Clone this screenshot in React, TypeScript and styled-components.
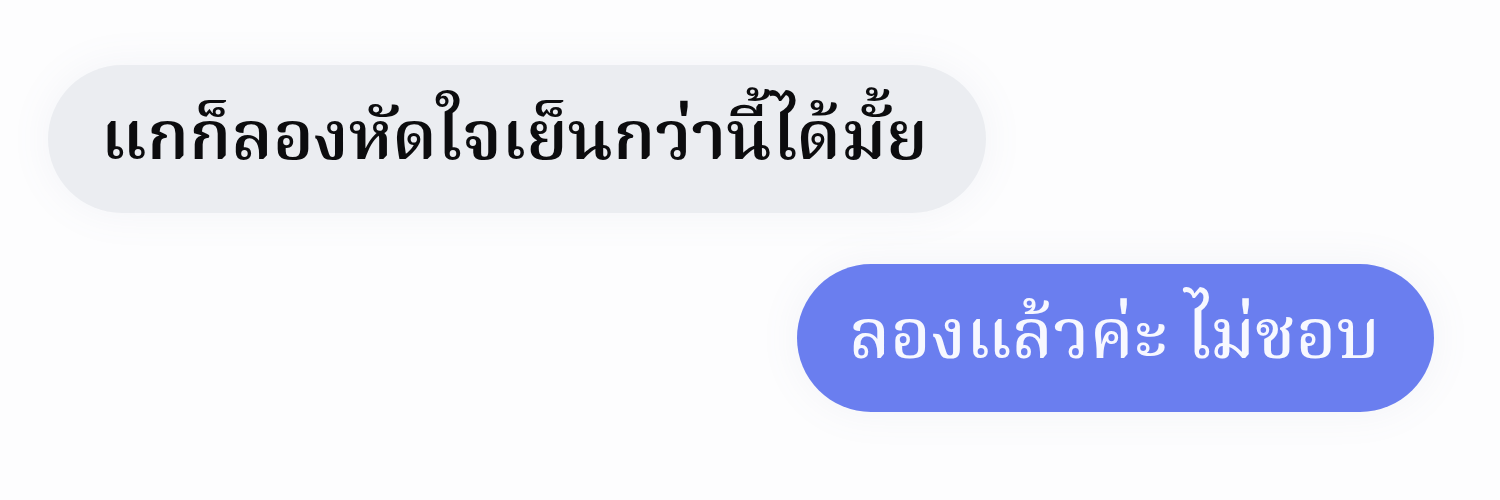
import React from "react";
import styled, { createGlobalStyle } from "styled-components";

const Global = createGlobalStyle`
  html, body { margin: 0; padding: 0; background: #ffffff; }
  body { font-family: "Noto Serif Thai", "Noto Sans Thai", "Noto Sans", sans-serif; }
`;

const Chat = styled.div`
  width: 1500px;
  height: 500px;
  box-sizing: border-box;
  padding: 65px 66px 0 48px;
  display: flex;
  flex-direction: column;
  gap: 51px;
  background: #fdfdfe;
`;

const Bubble = styled.div<{ $mine?: boolean }>`
  align-self: ${(p) => (p.$mine ? "flex-end" : "flex-start")};
  height: 148px;
  box-sizing: border-box;
  border-radius: 74px;
  display: flex;
  align-items: center;
  padding: ${(p) => (p.$mine ? "4px 54px 0 52px" : "4px 58px 0 53px")};
  background: ${(p) => (p.$mine ? "#6a7eef" : "#ebedf1")};
  color: ${(p) => (p.$mine ? "#f7f8ff" : "#0c0c0e")};
  font-size: ${(p) => (p.$mine ? "69px" : "68px")};
  font-weight: ${(p) => (p.$mine ? 500 : 600)};
  white-space: nowrap;
  box-shadow: 0 0 40px rgba(120, 130, 160, 0.08);
`;

export default function App() {
  return (
    <>
      <Global />
      <Chat>
        <Bubble>แกก็ลองหัดใจเย็นกว่านี้ได้มั้ย</Bubble>
        <Bubble $mine>ลองแล้วค่ะ ไม่ชอบ</Bubble>
      </Chat>
    </>
  );
}
